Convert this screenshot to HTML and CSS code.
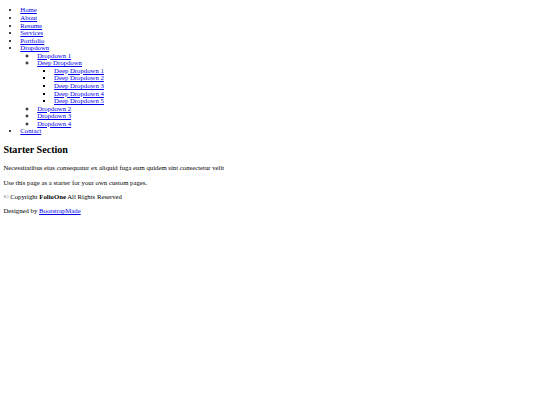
FILE: index.html
```
<!DOCTYPE html>
<html lang="en">
<head>
<meta charset="utf-8">
<title>Starter Page - FolioOne</title>
<link rel="stylesheet" href="styles.css">
</head>
<body>
<header class="header">
  <nav class="navmenu">
    <ul>
      <li><a href="#">Home</a></li>
      <li><a href="#">About</a></li>
      <li><a href="#">Resume</a></li>
      <li><a href="#">Services</a></li>
      <li><a href="#">Portfolio</a></li>
      <li><a href="#">Dropdown</a>
        <ul>
          <li><a href="#">Dropdown 1</a></li>
          <li><a href="#">Deep Dropdown</a>
            <ul>
              <li><a href="#">Deep Dropdown 1</a></li>
              <li><a href="#">Deep Dropdown 2</a></li>
              <li><a href="#">Deep Dropdown 3</a></li>
              <li><a href="#">Deep Dropdown 4</a></li>
              <li><a href="#">Deep Dropdown 5</a></li>
            </ul>
          </li>
          <li><a href="#">Dropdown 2</a></li>
          <li><a href="#">Dropdown 3</a></li>
          <li><a href="#">Dropdown 4</a></li>
        </ul>
      </li>
      <li><a href="#">Contact</a></li>
    </ul>
  </nav>
</header>
<main class="main">
  <section class="starter-section">
    <h2>Starter Section</h2>
    <p>Necessitatibus eius consequatur ex aliquid fuga eum quidem sint consectetur velit</p>
    <p>Use this page as a starter for your own custom pages.</p>
  </section>
</main>
<footer class="footer">
  <div class="copyright">
    <p>© <span>Copyright</span> <strong class="sitename">FolioOne</strong> <span>All Rights Reserved</span></p>
  </div>
  <div class="credits">Designed by <a href="#">BootstrapMade</a></div>
</footer>
</body>
</html>
```
FILE: styles.css
```
body {
  margin: 0 3.4px 3.4px;
  font-family: "Liberation Serif", "Times New Roman", serif;
  font-size: 6.75px;
  line-height: 7.56px;
  color: #000;
}
.navmenu ul {
  margin: 6.4px 0;
  padding-left: 16.9px;
}
.navmenu ul ul {
  margin: 0;
}
.starter-section h2 {
  font-size: 10.1px;
  line-height: 11.5px;
  margin: 9.3px 0 8.3px;
}
p {
  margin: 6.9px 0;
}
a {
  color: #0000ee;
}
```
